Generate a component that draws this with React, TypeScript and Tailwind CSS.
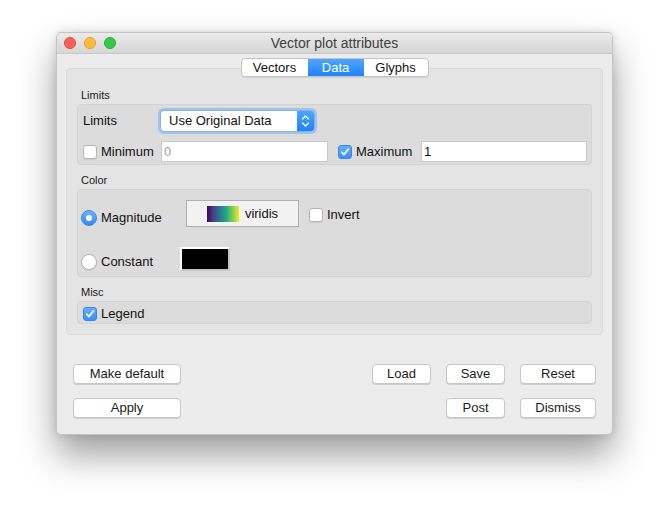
import { ReactNode } from 'react'

function Check({ checked }: { checked?: boolean }) {
  if (checked) {
    return (
      <div className="flex h-[14px] w-[14px] shrink-0 items-center justify-center rounded-[3px] bg-gradient-to-b from-[#68aef9] to-[#3b8ff6] border border-[#3a86e8]">
        <svg width="10" height="10" viewBox="0 0 10 10">
          <path d="M1.8 5.2 L4 7.6 L8.4 2" fill="none" stroke="white" strokeWidth="1.6" strokeLinecap="round" strokeLinejoin="round" />
        </svg>
      </div>
    )
  }
  return <div className="h-[14px] w-[14px] shrink-0 rounded-[3px] border border-[#b4b4b4] bg-white shadow-[0_1px_1px_rgba(0,0,0,0.08)]" />
}

function Radio({ on }: { on?: boolean }) {
  if (on) {
    return (
      <div className="flex h-[16px] w-[16px] shrink-0 items-center justify-center rounded-full bg-gradient-to-b from-[#6cb3fa] to-[#2f8af5] border border-[#3585ec]">
        <div className="h-[6px] w-[6px] rounded-full bg-white" />
      </div>
    )
  }
  return <div className="h-[16px] w-[16px] shrink-0 rounded-full border border-[#b4b4b4] bg-white shadow-[0_1px_1px_rgba(0,0,0,0.08)]" />
}

function Btn({ children, w }: { children: ReactNode; w: string }) {
  return (
    <div className={`${w} flex h-[20px] items-center justify-center rounded-[4px] border border-[#c6c6c6] bg-white text-[13px] text-[#1a1a1a] shadow-[0_1px_0_rgba(0,0,0,0.12)]`}>
      {children}
    </div>
  )
}

function Section({ title, children, cls }: { title: string; children: ReactNode; cls: string }) {
  return (
    <div className="flex flex-col">
      <div className="ml-[4px] h-[14px] text-[11px] leading-[14px] text-[#1a1a1a]">{title}</div>
      <div className={`mt-[2px] rounded-[4px] border border-[#d3d3d3] bg-[#dcdcdc] ${cls}`}>{children}</div>
    </div>
  )
}

export default function App() {
  return (
    <div className="min-h-[515px] w-[669px] bg-white pl-[56px] pt-[32px] font-['Liberation_Sans',Arial,sans-serif]">
      <div className="flex h-[403px] w-[557px] flex-col overflow-hidden rounded-[5px] border border-[#c4c4c4] bg-[#ececec] shadow-[0_20px_36px_rgba(0,0,0,0.38),0_0_10px_rgba(0,0,0,0.12)]">
        {/* title bar */}
        <div className="relative flex h-[21px] shrink-0 items-center border-b border-[#c9c9c9] bg-gradient-to-b from-[#ebebeb] to-[#d6d6d6]">
          <div className="ml-[7px] flex gap-[8px]">
            <div className="h-[12px] w-[12px] rounded-full border border-[#e2463f] bg-[#fc605c]" />
            <div className="h-[12px] w-[12px] rounded-full border border-[#e1a116] bg-[#fdbc40]" />
            <div className="h-[12px] w-[12px] rounded-full border border-[#2dac2f] bg-[#34c84a]" />
          </div>
          <div className="absolute inset-0 flex items-center justify-center text-[14px] text-[#404040]">Vector plot attributes</div>
        </div>

        {/* tabs + panel */}
        <div className="flex flex-col px-[9px] pt-[4px]">
          <div className="relative z-10 -mb-[9px] flex justify-center">
            <div className="flex h-[19px] overflow-hidden rounded-[4px] border border-[#c4c4c4] bg-white text-[13px] shadow-[0_1px_0_rgba(0,0,0,0.08)]">
              <div className="flex w-[66px] items-center justify-center text-[#111]">Vectors</div>
              <div className="flex w-[56px] items-center justify-center bg-gradient-to-b from-[#4ea6fc] to-[#1f82f7] text-white">Data</div>
              <div className="flex w-[64px] items-center justify-center text-[#111]">Glyphs</div>
            </div>
          </div>
          <div className="flex flex-col gap-[8px] rounded-[4px] border border-[#dadada] bg-[#e4e4e4] px-[10px] pb-[10px] pt-[19px]">
            <Section title="Limits" cls="h-[61px] pl-[5px] pt-[5px]">
              <div className="flex h-[22px] items-center">
                <div className="w-[77px] text-[13px] text-[#111]">Limits</div>
                <div className="flex h-[22px] w-[155px] items-stretch rounded-[4px] border border-[#7fb3f2] bg-white shadow-[0_0_0_2px_rgba(100,160,240,0.45)]">
                  <div className="flex flex-1 items-center pl-[8px] text-[13px] text-[#111]">Use Original Data</div>
                  <div className="flex w-[17px] items-center justify-center rounded-r-[3px] bg-gradient-to-b from-[#4ea6fc] to-[#1f82f7]">
                    <svg width="9" height="14" viewBox="0 0 9 14">
                      <path d="M1.5 5 L4.5 2 L7.5 5 M1.5 9 L4.5 12 L7.5 9" fill="none" stroke="white" strokeWidth="1.3" strokeLinecap="round" strokeLinejoin="round" />
                    </svg>
                  </div>
                </div>
              </div>
              <div className="mt-[9px] flex h-[21px] items-center">
                <div className="flex w-[78px] items-center gap-[4px]">
                  <Check />
                  <span className="text-[13px] text-[#111]">Minimum</span>
                </div>
                <div className="flex h-[21px] w-[167px] items-center border border-[#c8c8c8] bg-white pl-[2px] text-[13px] text-[#a0a0a0]">0</div>
                <div className="ml-[10px] flex w-[83px] items-center gap-[4px]">
                  <Check checked />
                  <span className="text-[13px] text-[#111]">Maximum</span>
                </div>
                <div className="flex h-[21px] w-[166px] items-center border border-[#c8c8c8] bg-white pl-[2px] text-[13px] text-[#111]">1</div>
              </div>
            </Section>

            <Section title="Color" cls="h-[88px] pl-[3px] pt-[10px]">
              <div className="flex h-[27px] items-start">
                <div className="mt-[8px] flex w-[105px] items-center gap-[4px]">
                  <Radio on />
                  <span className="text-[13px] text-[#111]">Magnitude</span>
                </div>
                <div className="flex h-[27px] w-[113px] items-center justify-center gap-[6px] border border-[#b0b0b0] bg-[#f2f2f2]">
                  <div className="h-[16px] w-[32px] bg-[linear-gradient(to_right,#440154,#414487,#2a788e,#22a884,#7ad151,#fde725)]" />
                  <span className="text-[13px] text-[#111]">viridis</span>
                </div>
                <div className="ml-[10px] mt-[5px] flex items-center gap-[4px]">
                  <Check />
                  <span className="text-[13px] text-[#111]">Invert</span>
                </div>
              </div>
              <div className="mt-[20px] flex h-[24px] items-start">
                <div className="mt-[5px] flex w-[99px] items-center gap-[4px]">
                  <Radio />
                  <span className="text-[13px] text-[#111]">Constant</span>
                </div>
                <div className="h-[24px] w-[50px] border-[2px] border-t-white border-l-white border-r-[#c4c4c4] border-b-[#c4c4c4] bg-black" />
              </div>
            </Section>

            <Section title="Misc" cls="flex h-[23px] items-center pl-[5px] pt-[2px]">
              <div className="flex items-center gap-[4px]">
                <Check checked />
                <span className="text-[13px] text-[#111]">Legend</span>
              </div>
            </Section>
          </div>
        </div>

        {/* buttons */}
        <div className="mt-[29px] flex flex-col gap-[14px] px-[16px]">
          <div className="flex justify-between">
            <Btn w="w-[108px]">Make default</Btn>
            <div className="flex gap-[15px]">
              <Btn w="w-[59px]">Load</Btn>
              <Btn w="w-[59px]">Save</Btn>
              <Btn w="w-[76px]">Reset</Btn>
            </div>
          </div>
          <div className="flex justify-between">
            <Btn w="w-[108px]">Apply</Btn>
            <div className="flex gap-[15px]">
              <Btn w="w-[59px]">Post</Btn>
              <Btn w="w-[76px]">Dismiss</Btn>
            </div>
          </div>
        </div>
      </div>
    </div>
  )
}
